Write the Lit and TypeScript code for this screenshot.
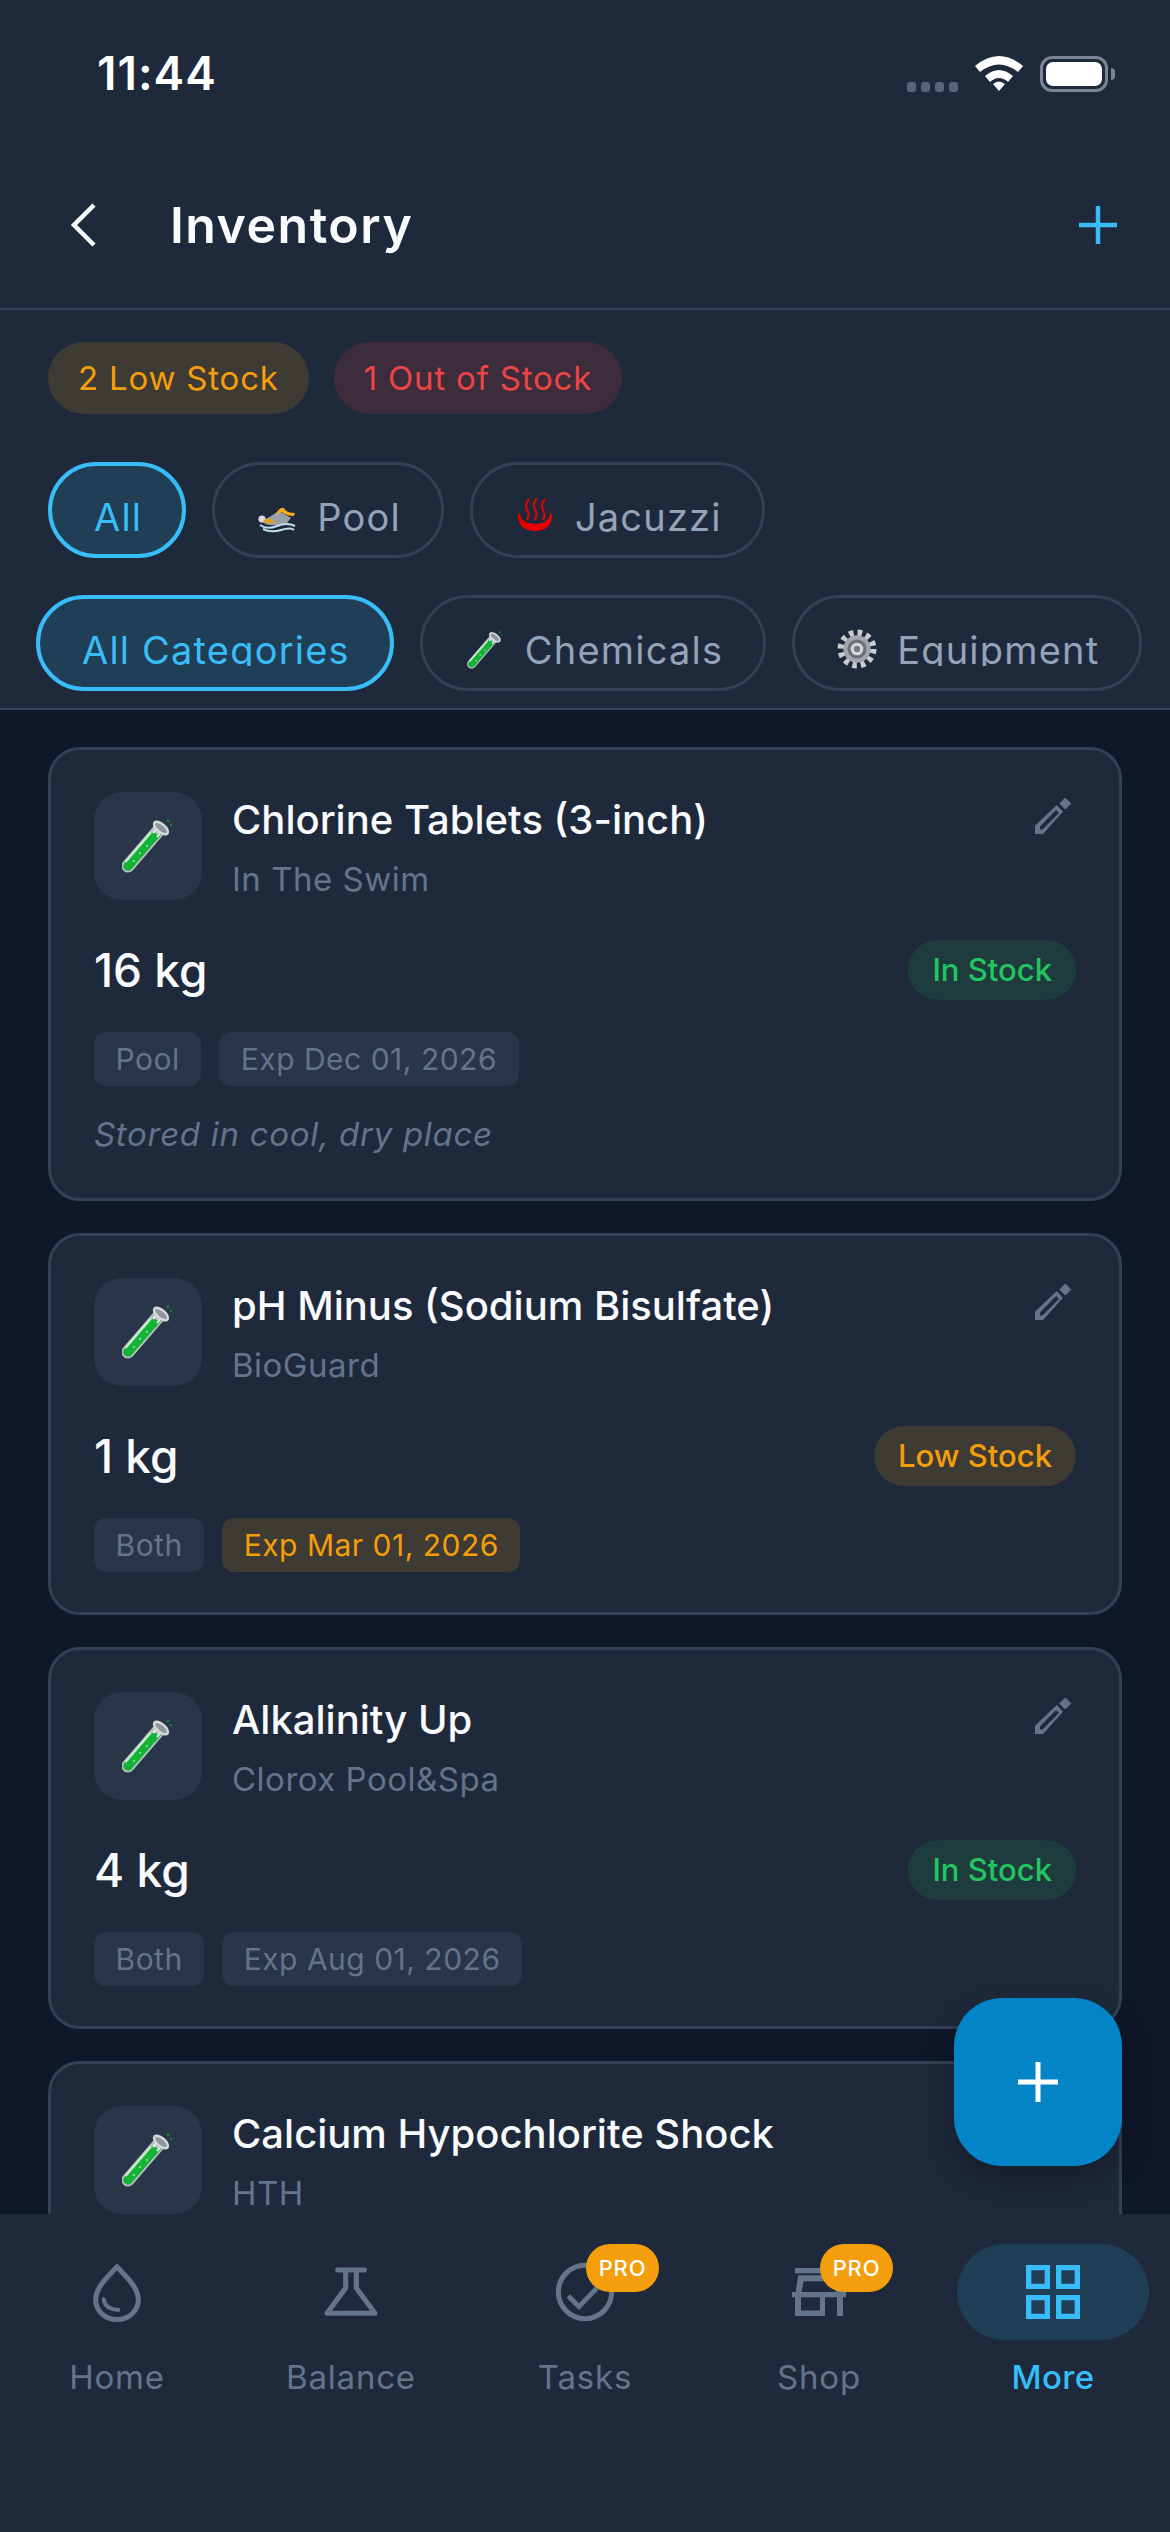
import { LitElement, html, css, svg } from "lit";
import { customElement } from "lit/decorators.js";

const tube = html`<svg class="tube" viewBox="0 0 50 54">
  <circle cx="46" cy="1.800" r="1.500" fill="#1d7d3a"/><circle cx="49" cy="6" r="1.200" fill="#1d7d3a"/>
  <path d="M6 47 L37 11" stroke="#b9bfc2" stroke-width="13" stroke-linecap="round"/>
  <path d="M6 47 L31 18" stroke="#14b236" stroke-width="9.500" stroke-linecap="round"/>
  <path d="M29 15 L40 15 L33 23 L26 23 Z" fill="#14b236"/>
  <path d="M3.500 43 L29 13.500" stroke="#c4efcc" stroke-width="2"/>
  <path d="M37 7 L31 14 M40 12 L35 18" stroke="#e6e9eb" stroke-width="2"/>
  <circle cx="12" cy="42" r="1.100" fill="#8fe8a4"/><circle cx="18" cy="34" r="1.100" fill="#8fe8a4"/><circle cx="25" cy="27" r="1.100" fill="#8fe8a4"/>
  <ellipse cx="39" cy="9" rx="8.500" ry="4" transform="rotate(40 39 9)" fill="#8f979c" stroke="#d6d9dc" stroke-width="2.400"/>
</svg>`;

const swimmer = html`<svg class="emoji low" viewBox="0 0 40 28">
  <path d="M6 15 L22 5 L34 12 L30 17 Q18 21 8 18 Z" fill="#9a9fa6"/>
  <path d="M19 7 Q23 1 27 2 Q29 7 38 7 L37 10 Q29 10 25 6 Q22 6 19 9 Z" fill="#f0ad17"/>
  <circle cx="5" cy="13" r="3.600" fill="#d9dde0"/>
  <path d="M6 14 L12 12 L19 17 L8 17 Z" fill="#e6a31a"/>
  <path d="M3 19 Q10 24 20 20 T38 20 M6 23 Q14 27 24 24 T37 24" stroke="#bfe0ec" stroke-width="2" fill="none"/>
</svg>`;

const springs = html`<svg class="emoji steam" viewBox="0 0 36 34">
  <path d="M1 18 Q2 33 18 33 Q34 33 35 18 Q35 15 33 15 Q33 25 18 26 Q3 25 3 15 Q1 15 1 18 Z" fill="#e60000"/>
  <path d="M12 1 Q7 7 10 12 Q13 17 10 22 M20 0 Q15 6 18 11 Q21 16 18 22 M28 1 Q23 7 26 12 Q29 17 26 22" stroke="#e60000" stroke-width="2" fill="none"/>
</svg>`;

const gear = html`<svg class="emoji" viewBox="0 0 38 38">
  <circle cx="19" cy="19" r="14.500" fill="none" stroke="#c9ccd0" stroke-width="8" stroke-dasharray="4 3.600"/>
  <circle cx="19" cy="19" r="13" fill="#a2a5a9"/>
  <circle cx="19" cy="19" r="9" fill="#6d7075"/>
  <circle cx="19" cy="19" r="6" fill="#d5d7da"/>
  <circle cx="19" cy="19" r="3" fill="#787b80"/>
</svg>`;

const navIcons: Record<string, unknown> = {
  Home: svg`<path d="M24 5 C18 12 8 20 8 30 A16 14.600 0 0 0 40 30 C40 20 30 12 24 5 Z" fill="none" stroke="currentColor" stroke-width="3.800" stroke-linejoin="round"/>
    <path d="M14 29.500 Q15 37 25 37.500" fill="none" stroke="currentColor" stroke-width="3" stroke-linecap="round"/>`,
  Balance: svg`<path d="M14 7.500 H34 M20 8 V21 L6 40 H42 L28 21 V8" fill="none" stroke="currentColor" stroke-width="3.800" stroke-linejoin="round" stroke-linecap="round"/>`,
  Tasks: svg`<circle cx="24" cy="24" r="20" fill="none" stroke="currentColor" stroke-width="3.800"/>
    <path d="M11.500 27 L19.500 35 L33 21" fill="none" stroke="currentColor" stroke-width="3.600"/>`,
  Shop: svg`<path d="M6 6 H42 V10 H6 Z M8.500 11.500 H39.500 L41.500 24 H44.300 V28 H42 V42 H37.500 V28 H28.500 V42 H6 V28 H3.700 V24 H6.500 Z M12.500 16 L11 24 H37 L35.500 16 Z M10.500 28 V37.800 H24.700 V28 Z" fill="currentColor" fill-rule="evenodd"/>`,
  More: svg`<path d="M5.750 5.750 H19.750 V19.750 H5.750 Z M28.250 5.750 H42.250 V19.750 H28.250 Z M5.750 28.250 H19.750 V42.250 H5.750 Z M28.250 28.250 H42.250 V42.250 H28.250 Z" fill="none" stroke="currentColor" stroke-width="4"/>`,
};

type Item = {
  name: string;
  brand: string;
  qty: string;
  status: string;
  tag: string;
  exp: string;
  warn?: boolean;
  note?: string;
};

const items: Item[] = [
  { name: "Chlorine Tablets (3-inch)", brand: "In The Swim", qty: "16 kg", status: "In Stock", tag: "Pool", exp: "Exp Dec 01, 2026", note: "Stored in cool, dry place" },
  { name: "pH Minus (Sodium Bisulfate)", brand: "BioGuard", qty: "1 kg", status: "Low Stock", tag: "Both", exp: "Exp Mar 01, 2026", warn: true },
  { name: "Alkalinity Up", brand: "Clorox Pool&Spa", qty: "4 kg", status: "In Stock", tag: "Both", exp: "Exp Aug 01, 2026" },
  { name: "Calcium Hypochlorite Shock", brand: "HTH", qty: "", status: "", tag: "", exp: "" },
];

@customElement("app-root")
export class AppRoot extends LitElement {
  static styles = css`
    :host {
      display: block;
      font-family: Inter, "Liberation Sans", sans-serif;
    }
    .screen {
      position: relative;
      width: 1170px;
      height: 2532px;
      display: flex;
      flex-direction: column;
      overflow: hidden;
      background: #0f172a;
    }
    .status {
      height: 142px;
      flex: none;
      box-sizing: border-box;
      padding: 50px 62px 0 97px;
      display: flex;
      justify-content: space-between;
      align-items: flex-start;
      background: #1e293b;
      color: #fff;
    }
    .time {
      font-size: 46px;
      font-weight: 600;
      line-height: 46px;
      letter-spacing: 1px;
    }
    .status-icons {
      display: flex;
      align-items: flex-start;
      margin-top: 5px;
    }
    .dots {
      display: flex;
      gap: 5px;
      margin: 27px 17px 0 0;
    }
    .dots i {
      width: 9px;
      height: 10px;
      border-radius: 3px;
      background: #59647a;
    }
    .wifi {
      width: 48px;
      height: 36px;
      margin-right: 17px;
    }
    .battery {
      width: 68px;
      height: 36px;
      margin-top: 1px;
      box-sizing: border-box;
      border: 3px solid #7c8594;
      border-radius: 12px;
      padding: 3px;
      position: relative;
    }
    .battery::before {
      content: "";
      display: block;
      height: 100%;
      border-radius: 7px;
      background: #fff;
    }
    .battery::after {
      content: "";
      position: absolute;
      right: -10px;
      top: 9px;
      width: 4px;
      height: 12px;
      border-radius: 0 4px 4px 0;
      background: #7c8594;
    }
    .header {
      height: 168px;
      flex: none;
      box-sizing: border-box;
      padding: 0 52px 0 70px;
      display: flex;
      align-items: center;
      background: #1e293b;
      border-bottom: 2px solid #334155;
    }
    .back {
      width: 28px;
      height: 44px;
      margin-right: 72px;
    }
    .title {
      flex: 1;
      font-size: 50px;
      font-weight: 600;
      color: #f8fafc;
      letter-spacing: 1.500px;
    }
    .add {
      width: 40px;
      height: 40px;
    }
    .filters {
      flex: none;
      height: 400px;
      box-sizing: border-box;
      background: #1e293b;
      border-bottom: 2px solid #334155;
      padding-top: 32px;
      display: flex;
      flex-direction: column;
    }
    .summary {
      display: flex;
      gap: 25px;
      padding-left: 48px;
      margin-bottom: 48px;
    }
    .chip {
      height: 72px;
      padding: 0 30px;
      border-radius: 36px;
      font-size: 33px;
      line-height: 72px;
      letter-spacing: 0.800px;
    }
    .chip.low {
      background: rgba(245, 158, 11, 0.15);
      color: #f59e0b;
    }
    .chip.out {
      background: rgba(239, 68, 68, 0.15);
      color: #ef4444;
    }
    .pills {
      display: flex;
      gap: 26px;
      padding-left: 48px;
      margin-bottom: 37px;
      white-space: nowrap;
    }
    .pills.cats {
      padding-left: 36px;
      margin-bottom: 0;
    }
    .pill {
      flex: none;
      height: 96px;
      box-sizing: border-box;
      border: 3px solid #334155;
      border-radius: 48px;
      padding: 0 40px 0 42px;
      display: flex;
      align-items: flex-start;
      gap: 20px;
      font-size: 38px;
      line-height: 44px;
      color: #94a3b8;
      letter-spacing: 1.200px;
    }
    .pill span {
      display: block;
      margin-top: 30px;
    }
    /* the category labels are cut just under the baseline in the reference */
    .cats .pill span {
      height: 38px;
      overflow: hidden;
    }
    .pill.on {
      border: 4px solid #38bdf8;
      background: rgba(56, 189, 248, 0.15);
      color: #38bdf8;
    }
    .pill.on span {
      margin-top: 29px;
    }
    .emoji {
      width: 40px;
      height: 40px;
      margin-top: 31px;
      flex: none;
    }
    .emoji.low {
      margin-top: 35px;
    }
    .emoji.steam {
      width: 36px;
      height: 34px;
      margin: 33px 2px 0;
    }
    .tube-small {
      width: 40px;
      height: 38px;
      margin-top: 33px;
      flex: none;
      display: flex;
      justify-content: center;
    }
    .tube-small .tube {
      width: 36px;
      height: 38px;
    }
    .list {
      flex: 1;
      min-height: 0;
      overflow: hidden;
      box-sizing: border-box;
      padding: 37px 48px 0;
      display: flex;
      flex-direction: column;
      gap: 32px;
    }
    .card {
      flex: none;
      box-sizing: border-box;
      background: #1e293b;
      border: 3px solid #334155;
      border-radius: 32px;
      padding: 42px 43px 40px;
    }
    .top {
      display: flex;
      gap: 30px;
    }
    .thumb {
      width: 108px;
      height: 108px;
      flex: none;
      border-radius: 28px;
      background: #293548;
      display: flex;
      align-items: center;
      justify-content: center;
    }
    .tube {
      width: 50px;
      height: 54px;
    }
    .thumb .tube {
      margin-left: -3px;
    }
    .info {
      flex: 1;
      min-width: 0;
    }
    .name {
      font-size: 40px;
      font-weight: 500;
      line-height: 52px;
      color: #f8fafc;
      margin-top: 2px;
    }
    .brand {
      font-size: 33px;
      line-height: 40px;
      color: #64748b;
      margin-top: 13px;
      letter-spacing: 0.500px;
    }
    .pencil {
      width: 38px;
      height: 38px;
      margin: 5px 4px 0 0;
      flex: none;
    }
    .stock {
      display: flex;
      justify-content: space-between;
      align-items: center;
      margin-top: 40px;
    }
    .qty {
      font-size: 46px;
      font-weight: 500;
      line-height: 60px;
      color: #f8fafc;
    }
    .badge {
      height: 60px;
      line-height: 60px;
      padding: 0 24px;
      border-radius: 30px;
      font-size: 31px;
      font-weight: 500;
    }
    .badge.ok {
      background: rgba(34, 197, 94, 0.12);
      color: #22c55e;
    }
    .badge.warn {
      background: rgba(245, 158, 11, 0.15);
      color: #f59e0b;
    }
    .tags {
      display: flex;
      gap: 18px;
      margin-top: 32px;
    }
    .tag {
      height: 54px;
      line-height: 54px;
      padding: 0 21.500px;
      border-radius: 12px;
      background: #293548;
      color: #64748b;
      font-size: 30px;
      letter-spacing: 0.500px;
    }
    .tag.warn {
      background: rgba(245, 158, 11, 0.15);
      color: #f59e0b;
    }
    .note {
      margin: 26px 0 1px;
      font-size: 33px;
      font-style: italic;
      line-height: 45px;
      color: #64748b;
      letter-spacing: 0.700px;
    }
    .fab {
      position: absolute;
      left: 954px;
      top: 1998px;
      width: 168px;
      height: 168px;
      border-radius: 48px;
      background: #0284c7;
      box-shadow: 0 12px 30px rgba(0, 0, 0, 0.3);
      display: flex;
      align-items: center;
      justify-content: center;
    }
    .fab svg {
      width: 44px;
      height: 44px;
    }
    .nav {
      flex: none;
      height: 318px;
      box-sizing: border-box;
      background: #1e293b;
      padding-top: 30px;
      display: grid;
      grid-template-columns: repeat(5, 234px);
      align-items: start;
    }
    .nav-item {
      display: flex;
      flex-direction: column;
      align-items: center;
      color: #64748b;
      font-size: 33px;
      letter-spacing: 0.800px;
      line-height: 40px;
    }
    .nav-icon {
      position: relative;
      width: 192px;
      height: 96px;
      border-radius: 48px;
      display: flex;
      align-items: center;
      justify-content: center;
      margin-bottom: 17px;
    }
    .nav-icon svg {
      width: 64px;
      height: 64px;
    }
    .nav-item.on {
      color: #38bdf8;
      font-weight: 500;
      letter-spacing: 0.400px;
    }
    .nav-item.on .nav-icon {
      background: rgba(56, 189, 248, 0.15);
    }
    .pro {
      position: absolute;
      left: 97px;
      top: 0;
      width: 73px;
      height: 48px;
      border-radius: 24px;
      background: #f59e0b;
      color: #fff;
      font-size: 22px;
      font-weight: 500;
      line-height: 48px;
      text-align: center;
      letter-spacing: 0.800px;
    }
  `;

  renderCard(item: Item) {
    return html`
      <div class="card">
        <div class="top">
          <div class="thumb">${tube}</div>
          <div class="info">
            <div class="name">${item.name}</div>
            <div class="brand">${item.brand}</div>
          </div>
          <svg class="pencil" viewBox="0 0 38 38">
            <path d="M31.300 1 L36.800 6.500 L31.300 12 L25.800 6.500 Z" fill="#64748b" stroke="#64748b" stroke-linejoin="round"/>
            <path d="M22.700 8 L29 14.700 L9 37 H1 V28.700 Z M22 13 L25 16 L8.500 32.500 H6 V29.500 Z" fill="#64748b" fill-rule="evenodd"/>
          </svg>
        </div>
        ${item.qty
          ? html`
              <div class="stock">
                <div class="qty">${item.qty}</div>
                <div class="badge ${item.warn ? "warn" : "ok"}">${item.status}</div>
              </div>
              <div class="tags">
                <div class="tag">${item.tag}</div>
                <div class="tag ${item.warn ? "warn" : ""}">${item.exp}</div>
              </div>
            `
          : ""}
        ${item.note ? html`<div class="note">${item.note}</div>` : ""}
      </div>
    `;
  }

  render() {
    return html`
      <div class="screen">
        <div class="status">
          <div class="time">11:44</div>
          <div class="status-icons">
            <div class="dots"><i></i><i></i><i></i><i></i></div>
            <svg class="wifi" viewBox="0 0 48 36">
              <path d="M0 11 Q24 -9 48 11 L43 17 Q24 2 5 17 Z M10 21 Q24 9 38 21 L33 27 Q24 19 15 27 Z M18 29 Q24 24 30 29 L24 36 Z" fill="#fff"/>
            </svg>
            <div class="battery"></div>
          </div>
        </div>
        <div class="header">
          <svg class="back" viewBox="0 0 28 44">
            <path d="M24 2 L4 22 L24 42" fill="none" stroke="#f8fafc" stroke-width="4.500"/>
          </svg>
          <div class="title">Inventory</div>
          <svg class="add" viewBox="0 0 40 40">
            <path d="M20 1 V39 M1 20 H39" stroke="#38bdf8" stroke-width="4.500"/>
          </svg>
        </div>
        <div class="filters">
          <div class="summary">
            <div class="chip low">2 Low Stock</div>
            <div class="chip out">1 Out of Stock</div>
          </div>
          <div class="pills">
            <div class="pill on"><span>All</span></div>
            <div class="pill">${swimmer}<span>Pool</span></div>
            <div class="pill">${springs}<span>Jacuzzi</span></div>
          </div>
          <div class="pills cats">
            <div class="pill on"><span>All Categories</span></div>
            <div class="pill"><div class="tube-small">${tube}</div><span>Chemicals</span></div>
            <div class="pill">${gear}<span>Equipment</span></div>
          </div>
        </div>
        <div class="list">${items.map((i) => this.renderCard(i))}</div>
        <div class="fab">
          <svg viewBox="0 0 44 44"><path d="M22 2 V42 M2 22 H42" stroke="#fff" stroke-width="5"/></svg>
        </div>
        <div class="nav">
          ${["Home", "Balance", "Tasks", "Shop", "More"].map(
            (n) => html`
              <div class="nav-item ${n === "More" ? "on" : ""}">
                <div class="nav-icon">
                  <svg viewBox="0 0 48 48">${navIcons[n]}</svg>
                  ${n === "Tasks" || n === "Shop" ? html`<div class="pro">PRO</div>` : ""}
                </div>
                ${n}
              </div>
            `
          )}
        </div>
      </div>
    `;
  }
}
